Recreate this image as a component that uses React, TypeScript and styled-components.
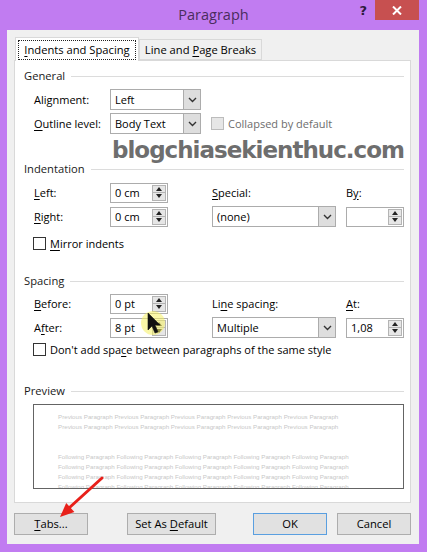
import React from 'react'
import styled, { createGlobalStyle } from 'styled-components'

const GlobalStyle = createGlobalStyle`
  html, body {
    margin: 0;
    padding: 0;
    background: #c17cf1;
  }
  * {
    box-sizing: border-box;
  }
`

const FONT = `'Open Sans', 'Noto Sans', sans-serif`

const Window = styled.div`
  position: relative;
  width: 427px;
  height: 552px;
  background: #c17cf1;
  display: flex;
  flex-direction: column;
  font-family: ${FONT};
  font-size: 11px;
  color: #000;
  overflow: hidden;
`
const TitleBar = styled.div`
  height: 30px;
  display: grid;
  grid-template-columns: 1fr auto 1fr;
`
const Title = styled.div`
  grid-column: 2;
  font-size: 14.5px;
  line-height: 30px;
  color: #4a2c5e;
`
const TitleControls = styled.div`
  grid-column: 3;
  display: flex;
  justify-content: flex-end;
  align-items: flex-start;
  padding-right: 8px;
`
const HelpMark = styled.div`
  font-family: 'DejaVu Sans', sans-serif;
  font-weight: bold;
  font-size: 13px;
  line-height: 22px;
  color: #2d1a3d;
  margin-right: 8px;
`
const CloseButton = styled.div`
  width: 44px;
  height: 20px;
  background: #c75050;
  display: flex;
  align-items: center;
  justify-content: center;
`
const Client = styled.div`
  flex: 1;
  margin: 0 8px 8px 7px;
  background: #f0f0f0;
  padding: 8px 8px 0 7px;
  display: flex;
  flex-direction: column;
`
const TabStrip = styled.div`
  display: flex;
  align-items: flex-end;
  height: 23px;
  padding-left: 1px;
  margin-bottom: -1px;
  position: relative;
  z-index: 1;
`
const Tab = styled.div<{ $active?: boolean }>`
  height: ${({ $active }) => ($active ? '24px' : '21px')};
  width: ${({ $active }) => ($active ? '124px' : '123px')};
  margin-bottom: ${({ $active }) => ($active ? '0' : '1px')};
  background: ${({ $active }) => ($active ? '#ffffff' : '#f0f0f0')};
  border: 1px solid #d9d9d9;
  border-bottom: ${({ $active }) => ($active ? 'none' : '1px solid #d9d9d9')};
  display: flex;
  align-items: center;
  justify-content: center;
  font-size: 11.2px;
  white-space: pre;
`
const TabFocus = styled.div`
  border: 1px dotted #222;
  padding: 1px 5px;
  line-height: 16px;
`
const Key = styled.span`
  text-decoration: underline;
  text-underline-offset: 2px;
`
const Panel = styled.div`
  height: 443px;
  background: #fff;
  border: 1px solid #d9d9d9;
  padding: 7px 6px 0 0;
  display: flex;
  flex-direction: column;
`
const GroupHeader = styled.div<{ $mt: number }>`
  margin-top: ${({ $mt }) => $mt}px;
  height: 16px;
  padding-left: 9px;
  display: flex;
  align-items: center;
  gap: 6px;
  line-height: 16px;
  color: #1a1a1a;
  font-size: 11.2px;
  &::after {
    content: '';
    flex: 1;
    height: 1px;
    background: #dcdcdc;
  }
`
const FieldGrid = styled.div<{ $mt: number }>`
  margin-top: ${({ $mt }) => $mt}px;
  padding-left: 19px;
  display: grid;
  grid-template-columns: 76px 102px 134px 58px;
  grid-auto-rows: 21px;
  row-gap: 3px;
  align-items: center;
`
const FieldLabel = styled.div`
  line-height: 16px;
  white-space: nowrap;
`
const ComboBox = styled.div<{ $width: number }>`
  width: ${({ $width }) => $width}px;
  height: 21px;
  background: #fff;
  border: 1px solid #acacac;
  display: flex;
  align-items: stretch;
`
const ComboText = styled.div`
  flex: 1;
  padding-left: 4px;
  line-height: 19px;
`
const ComboArrow = styled.div`
  width: 17px;
  background: #dedede;
  border-left: 1px solid #acacac;
  display: flex;
  align-items: center;
  justify-content: center;
`
const SpinBox = styled.div`
  width: 58px;
  height: 20px;
  background: #fff;
  border: 1px solid #acacac;
  display: flex;
  align-items: stretch;
  padding: 1px;
`
const SpinText = styled.div`
  flex: 1;
  padding-left: 3px;
  line-height: 16px;
`
const SpinButtons = styled.div`
  width: 14px;
  display: flex;
  flex-direction: column;
`
const SpinButton = styled.div`
  flex: 1;
  background: #e6e6e6;
  border: 1px solid #b4b4b4;
  display: flex;
  align-items: center;
  justify-content: center;
  & + & {
    border-top: none;
  }
`
const CheckRow = styled.div<{ $mt: number }>`
  margin-top: ${({ $mt }) => $mt}px;
  height: 17px;
  padding-left: 18px;
  display: flex;
  align-items: center;
  gap: 4px;
`
const CheckRowInline = styled.div`
  display: flex;
  align-items: center;
  gap: 4px;
  grid-column: 3 / span 2;
  margin-left: -1px;
`
const CheckBox = styled.div<{ $disabled?: boolean }>`
  width: 13px;
  height: 13px;
  background: ${({ $disabled }) => ($disabled ? '#e6e6e6' : '#fff')};
  border: 1px solid ${({ $disabled }) => ($disabled ? '#bcbcbc' : '#333')};
`
const CheckLabel = styled.div<{ $disabled?: boolean }>`
  color: ${({ $disabled }) => ($disabled ? '#6d6d6d' : '#000')};
  line-height: 16px;
  white-space: nowrap;
`
const PreviewBox = styled.div`
  margin: 5px 0 0 18px;
  height: 85px;
  background: #fff;
  border: 1px solid #646464;
  padding: 7px 0 0 24px;
  overflow: hidden;
`
const PreviewLine = styled.div<{ $mt?: number }>`
  margin-top: ${({ $mt }) => $mt ?? 0}px;
  font-family: 'Liberation Sans', Arial, sans-serif;
  font-size: 6.2px;
  line-height: 10px;
  color: #c8c8c8;
  white-space: nowrap;
`
const ButtonRow = styled.div`
  margin-top: 10px;
  display: flex;
  align-items: center;
`
const DialogButton = styled.div<{ $width: number; $default?: boolean; $ml?: string }>`
  width: ${({ $width }) => $width}px;
  height: 22px;
  margin-left: ${({ $ml }) => $ml ?? '0'};
  background: #e1e1e1;
  border: 1px solid ${({ $default }) => ($default ? '#5a9fe0' : '#adadad')};
  display: flex;
  align-items: center;
  justify-content: center;
  font-size: 11.2px;
  line-height: 16px;
  white-space: pre;
`
const Watermark = styled.div`
  position: absolute;
  left: 112px;
  top: 137px;
  font-family: 'DejaVu Sans', sans-serif;
  font-weight: bold;
  font-size: 23px;
  letter-spacing: -1px;
  color: #6e6e6e;
  text-shadow: 0 0 2px #fff, 0 0 2px #fff;
  pointer-events: none;
  white-space: nowrap;
`
const OverlaySvg = styled.svg`
  position: absolute;
  left: 0;
  top: 0;
  pointer-events: none;
`

function Chevron() {
  return (
    <svg width="9" height="6" viewBox="0 0 9 6">
      <polyline points="1,1 4.5,4.5 8,1" fill="none" stroke="#333" strokeWidth="1.4" />
    </svg>
  )
}

function Combo({ width, value }: { width: number; value: string }) {
  return (
    <ComboBox $width={width}>
      <ComboText>{value}</ComboText>
      <ComboArrow>
        <Chevron />
      </ComboArrow>
    </ComboBox>
  )
}

function Spin({ value }: { value: string }) {
  return (
    <SpinBox>
      <SpinText>{value}</SpinText>
      <SpinButtons>
        <SpinButton>
          <svg width="6" height="4" viewBox="0 0 6 4">
            <polygon points="0,4 3,0 6,4" fill="#222" />
          </svg>
        </SpinButton>
        <SpinButton>
          <svg width="6" height="4" viewBox="0 0 6 4">
            <polygon points="0,0 6,0 3,4" fill="#222" />
          </svg>
        </SpinButton>
      </SpinButtons>
    </SpinBox>
  )
}

const PREV = 'Previous Paragraph Previous Paragraph Previous Paragraph Previous Paragraph Previous Paragraph'
const FOLLOW = 'Following Paragraph Following Paragraph Following Paragraph Following Paragraph Following Paragraph'

export default function App() {
  return (
    <>
      <GlobalStyle />
      <Window>
        <TitleBar>
          <Title>Paragraph</Title>
          <TitleControls>
            <HelpMark>?</HelpMark>
            <CloseButton>
              <svg width="10" height="9" viewBox="0 0 10 9">
                <path d="M1 0.5 L9 8.5 M9 0.5 L1 8.5" stroke="#fff" strokeWidth="2" />
              </svg>
            </CloseButton>
          </TitleControls>
        </TitleBar>
        <Client>
          <TabStrip>
            <Tab $active>
              <TabFocus>
                <Key>I</Key>ndents and Spacing
              </TabFocus>
            </Tab>
            <Tab>
              <span>
                Line and <Key>P</Key>age Breaks
              </span>
            </Tab>
          </TabStrip>
          <Panel>
            <GroupHeader $mt={0}>General</GroupHeader>
            <FieldGrid $mt={5}>
              <FieldLabel>
                Ali<Key>g</Key>nment:
              </FieldLabel>
              <Combo width={91} value="Left" />
              <span />
              <span />
              <FieldLabel>
                <Key>O</Key>utline level:
              </FieldLabel>
              <Combo width={91} value="Body Text" />
              <CheckRowInline>
                <CheckBox $disabled />
                <CheckLabel $disabled>Collapsed by default</CheckLabel>
              </CheckRowInline>
            </FieldGrid>

            <GroupHeader $mt={27}>Indentation</GroupHeader>
            <FieldGrid $mt={5}>
              <FieldLabel>
                <Key>L</Key>eft:
              </FieldLabel>
              <Spin value="0 cm" />
              <FieldLabel>
                <Key>S</Key>pecial:
              </FieldLabel>
              <FieldLabel>
                B<Key>y</Key>:
              </FieldLabel>
              <FieldLabel>
                <Key>R</Key>ight:
              </FieldLabel>
              <Spin value="0 cm" />
              <Combo width={124} value="(none)" />
              <Spin value="" />
            </FieldGrid>
            <CheckRow $mt={8}>
              <CheckBox />
              <CheckLabel>
                <Key>M</Key>irror indents
              </CheckLabel>
            </CheckRow>

            <GroupHeader $mt={21}>Spacing</GroupHeader>
            <FieldGrid $mt={4}>
              <FieldLabel>
                <Key>B</Key>efore:
              </FieldLabel>
              <Spin value="0 pt" />
              <FieldLabel>
                Li<Key>n</Key>e spacing:
              </FieldLabel>
              <FieldLabel>
                <Key>A</Key>t:
              </FieldLabel>
              <FieldLabel>
                A<Key>f</Key>ter:
              </FieldLabel>
              <Spin value="8 pt" />
              <Combo width={124} value="Multiple" />
              <Spin value="1,08" />
            </FieldGrid>
            <CheckRow $mt={3}>
              <CheckBox />
              <CheckLabel>
                Don't add spa<Key>c</Key>e between paragraphs of the same style
              </CheckLabel>
            </CheckRow>

            <GroupHeader $mt={25}>Preview</GroupHeader>
            <PreviewBox>
              <PreviewLine>{PREV}</PreviewLine>
              <PreviewLine>{PREV}</PreviewLine>
              <PreviewLine $mt={20}>{FOLLOW}</PreviewLine>
              <PreviewLine>{FOLLOW}</PreviewLine>
              <PreviewLine>{FOLLOW}</PreviewLine>
              <PreviewLine>{FOLLOW}</PreviewLine>
            </PreviewBox>
          </Panel>
          <ButtonRow>
            <DialogButton $width={74}>
              <span>
                <Key>T</Key>abs...
              </span>
            </DialogButton>
            <DialogButton $width={89} $ml="39px">
              <span>
                Set As <Key>D</Key>efault
              </span>
            </DialogButton>
            <DialogButton $width={74} $ml="auto" $default>
              OK
            </DialogButton>
            <DialogButton $width={74} $ml="10px">
              Cancel
            </DialogButton>
          </ButtonRow>
        </Client>

        <Watermark>blogchiasekienthuc.com</Watermark>
        <OverlaySvg width="427" height="552" viewBox="0 0 427 552">
          <circle cx="153" cy="323" r="12" fill="#f5f060" opacity="0.55" />
          <path
            d="M148 313 L148 330 L152 326 L155 333 L158 332 L155 325 L160 325 Z"
            fill="#111"
            stroke="#111"
            strokeWidth="0.6"
          />
          <line x1="102" y1="478" x2="69" y2="508" stroke="#e8201a" strokeWidth="3" strokeLinecap="round" />
          <polygon points="60,517 74.4,511.9 66.2,503.1" fill="#e8201a" />
        </OverlaySvg>
      </Window>
    </>
  )
}
